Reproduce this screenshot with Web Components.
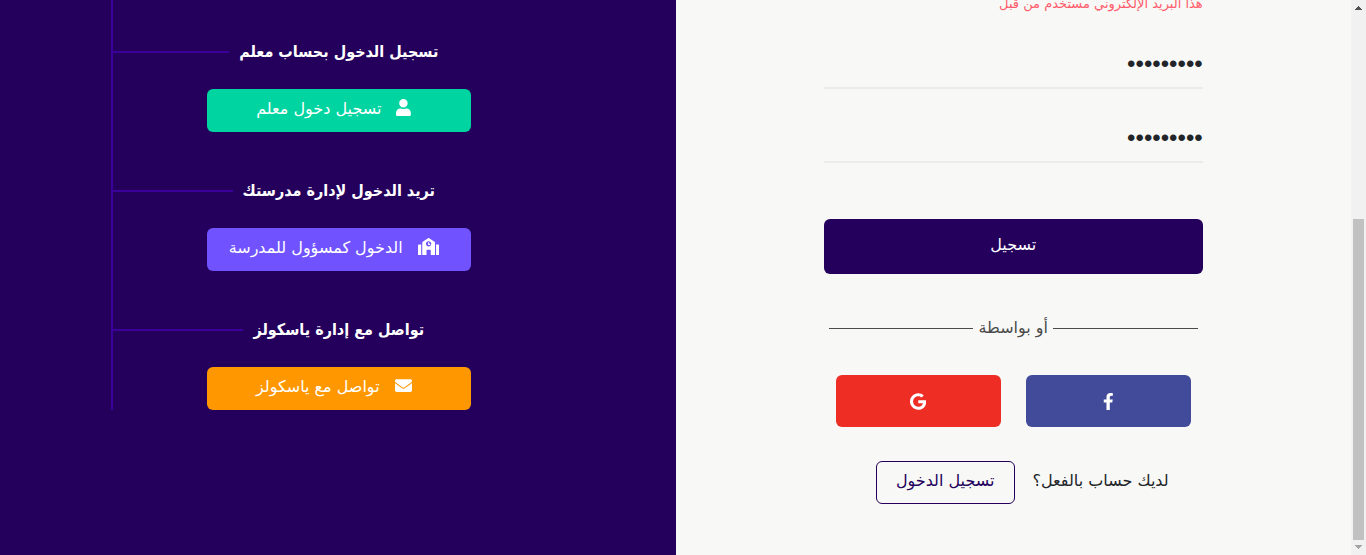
<!DOCTYPE html>
<html lang="ar" dir="rtl">
<head>
<meta charset="utf-8">
<meta name="viewport" content="width=device-width, initial-scale=1">
<title>تسجيل</title>
<style>
  html, body { margin: 0; }
  body {
    font-family: "DejaVu Sans", sans-serif;
    font-size: 16px;
    line-height: 24px;
    color: #212529;
    background: #f8f8f6;
    overflow: hidden;
  }
</style>
</head>
<body>
<signup-page>
  <signup-form slot="form"></signup-form>
  <side-rail slot="aside">
    <rail-item heading="تسجيل الدخول بحساب معلم" icon="user" tone="#00d4a1">تسجيل دخول معلم</rail-item>
    <rail-item heading="تريد الدخول لإدارة مدرستك" icon="school" tone="#7053ff">الدخول كمسؤول للمدرسة</rail-item>
    <rail-item heading="تواصل مع إدارة ياسكولز" icon="envelope" tone="#ff9800">تواصل مع ياسكولز</rail-item>
  </side-rail>
</signup-page>

<script>
const ICONS = {
  user: [448, 'M224 256c70.7 0 128-57.3 128-128S294.7 0 224 0 96 57.3 96 128s57.3 128 128 128zm89.6 32h-16.7c-22.2 10.2-46.9 16-72.9 16s-50.6-5.8-72.9-16h-16.7C60.2 288 0 348.2 0 422.4V464c0 26.5 21.5 48 48 48h352c26.5 0 48-21.5 48-48v-41.6c0-74.2-60.2-134.4-134.4-134.4z'],
  school: [640, 'M0 224v272c0 8.84 7.16 16 16 16h80V192H32c-17.67 0-32 14.33-32 32zm360-48h-24v-40c0-4.42-3.58-8-8-8h-16c-4.42 0-8 3.58-8 8v64c0 4.42 3.58 8 8 8h48c4.42 0 8-3.58 8-8v-16c0-4.42-3.58-8-8-8zm137.75-63.96l-160-106.67a32.02 32.02 0 0 0-35.5 0l-160 106.67A32.002 32.002 0 0 0 128 138.66V512h128V368c0-8.84 7.16-16 16-16h96c8.84 0 16 7.16 16 16v144h128V138.67c0-10.7-5.35-20.69-14.25-26.63zM320 256c-44.18 0-80-35.82-80-80s35.82-80 80-80 80 35.82 80 80-35.82 80-80 80zm288-64h-64v320h80c8.84 0 16-7.16 16-16V224c0-17.67-14.33-32-32-32z'],
  envelope: [512, 'M502.3 190.8c3.9-3.1 9.7-.2 9.7 4.7V400c0 26.5-21.5 48-48 48H48c-26.5 0-48-21.5-48-48V195.6c0-5 5.7-7.8 9.7-4.7 22.4 17.4 52.1 39.5 154.1 113.6 21.1 15.4 56.7 47.8 92.2 47.6 35.7.3 72-32.8 92.3-47.6 102-74.1 131.6-96.3 154-113.7zM256 320c23.2.4 56.6-29.2 73.4-41.4 132.7-96.3 142.8-104.7 173.4-128.7 5.8-4.5 9.2-11.5 9.2-18.9v-19c0-26.5-21.5-48-48-48H48c-26.5 0-48 21.5-48 48v19c0 7.4 3.4 14.3 9.2 18.9 30.6 23.9 40.7 32.4 173.4 128.7 16.8 12.2 50.2 41.8 73.4 41.4z'],
  facebook: [320, 'M279.14 288l14.22-92.66h-88.91v-60.13c0-25.35 12.42-50.06 52.24-50.06h40.42V6.26S260.43 0 225.36 0c-73.22 0-121.08 44.38-121.08 124.72v70.62H22.89V288h81.39v224h100.17V288z'],
  google: [488, 'M488 261.8C488 403.3 391.1 504 248 504 110.8 504 0 393.2 0 256S110.8 8 248 8c66.8 0 123 24.5 166.3 64.9l-67.5 64.9C258.5 52.6 94.3 116.6 94.3 256c0 86.5 69.1 156.6 153.7 156.6 98.2 0 135-70.4 140.8-106.9H248v-85.3h236.1c2.3 12.7 3.9 24.9 3.9 41.4z']
};

class BaseElement extends HTMLElement {
  connectedCallback() {
    if (!this.shadowRoot) this.attachShadow({ mode: 'open' }).innerHTML = this.render();
  }
}

customElements.define('ui-icon', class extends BaseElement {
  render() {
    const [width, path] = ICONS[this.getAttribute('name')];
    return `<style>
      :host { display: inline-flex; flex: none; }
      svg { height: 17px; width: auto; fill: currentColor; display: block; }
    </style>
    <svg viewBox="0 0 ${width} 512" aria-hidden="true"><path d="${path}"/></svg>`;
  }
});

customElements.define('page-scrollbar', class extends BaseElement {
  render() {
    return `<style>
      :host { display: flex; flex-direction: column; align-items: center; width: 15px; background: #f1f1f1; }
      svg { width: 15px; height: 15px; display: block; flex: none; }
      .track { flex: 1; width: 11px; display: flex; flex-direction: column; }
      .before { flex: 204; }
      .thumb { flex: 321; background: #c1c1c1; }
    </style>
    <svg viewBox="0 0 15 15" shape-rendering="crispEdges"><path fill="#505050" d="M7 6h1v1h1v1h1v1h1v1H4V9h1V8h1V7h1z"/></svg>
    <div class="track"><div class="before"></div><div class="thumb"></div></div>
    <svg viewBox="0 0 15 15" shape-rendering="crispEdges"><path fill="#a3a3a3" d="M4 5h7v1h-1v1H9v1H8v1H7V8H6V7H5V6H4z"/></svg>`;
  }
});

customElements.define('rail-item', class extends BaseElement {
  render() {
    return `<style>
      :host { display: block; }
      .heading { display: flex; align-items: center; gap: 10px; margin-bottom: 25px; }
      .heading::before, .heading::after { content: ""; flex: 1; height: 2px; }
      .heading::after { background: #3b0099; }
      h2 {
        margin: 0; color: #fff; white-space: nowrap;
        font-family: "DejaVu Sans Condensed", "DejaVu Sans", sans-serif;
        font-size: 16px; line-height: 24px; font-weight: 700;
      }
      a {
        display: flex; justify-content: center; gap: 15px;
        box-sizing: border-box; width: 264px; max-width: 100%; height: 43px;
        margin: 0 auto; padding: 8px 10px 11px 0;
        border-radius: 6px; color: #fff; text-decoration: none; white-space: nowrap;
      }
      ui-icon { margin-top: 2px; }
    </style>
    <div class="heading"><h2>${this.getAttribute('heading')}</h2></div>
    <a href="#" style="background:${this.getAttribute('tone')}"><ui-icon name="${this.getAttribute('icon')}"></ui-icon><span><slot></slot></span></a>`;
  }
});

customElements.define('side-rail', class extends BaseElement {
  render() {
    return `<style>
      :host { display: block; background: #24005c; }
      nav {
        display: flex; flex-direction: column; gap: 47px;
        width: 66.8%; margin: 0 auto; padding-top: 40px;
        border-left: 2px solid #3b0099;
      }
    </style>
    <nav><slot></slot></nav>`;
  }
});

customElements.define('password-field', class extends BaseElement {
  render() {
    return `<style>
      :host { display: block; }
      input {
        display: block; box-sizing: border-box; width: 100%; height: 50px;
        padding: 2px 0 0; border: 0; border-bottom: 2px solid #ebebea; border-radius: 0;
        background: transparent; color: #212529; outline: 0;
        font-family: "Liberation Sans", sans-serif; font-size: 24px; line-height: 24px;
      }
    </style>
    <input type="password" aria-label="${this.getAttribute('label')}" value="123456789">`;
  }
});

customElements.define('signup-form', class extends BaseElement {
  render() {
    return `<style>
      :host { display: block; }
      form { width: 56.1%; margin: -8px auto 0; }
      .error { margin: 0; font-size: 13px; line-height: 24px; color: #ff5b6a; white-space: nowrap; }
      .fields { display: grid; gap: 24px; margin-top: 23px; }
      button { font: inherit; border: 0; border-radius: 6px; color: #fff; }
      .submit { display: block; width: 100%; height: 55px; margin-top: 56px; padding: 0 0 4px; background: #24005c; }
      .divider { display: flex; align-items: center; gap: 5px; margin: 42px 5px 0; color: #4a4a4a; }
      .divider::before, .divider::after { content: ""; flex: 1; height: 1px; background: #4a4a4a; }
      .social { display: grid; grid-template-columns: 1fr 1fr; gap: 25px; margin: 35px 12px 0; }
      .social button { display: flex; align-items: center; justify-content: center; height: 52px; padding: 0; }
      .facebook { background: #424a9a; }
      .google { background: #ee2d24; }
      .login { display: flex; align-items: center; justify-content: center; margin-top: 34px; white-space: nowrap; }
      .login span { padding-bottom: 4px; }
      .login a {
        box-sizing: border-box; height: 43px; margin: 0 18px; padding: 7px 19px 12px;
        border: 1px solid #24005c; border-radius: 6px; color: #24005c; text-decoration: none;
      }
    </style>
    <form>
      <p class="error">هذا البريد الإلكتروني مستخدم من قبل</p>
      <div class="fields">
        <password-field label="كلمة المرور"></password-field>
        <password-field label="تأكيد كلمة المرور"></password-field>
      </div>
      <button class="submit" type="button">تسجيل</button>
      <div class="divider">أو بواسطة</div>
      <div class="social">
        <button class="facebook" type="button" aria-label="Facebook"><ui-icon name="facebook"></ui-icon></button>
        <button class="google" type="button" aria-label="Google"><ui-icon name="google"></ui-icon></button>
      </div>
      <div class="login"><span>لديك حساب بالفعل؟</span><a href="#">تسجيل الدخول</a></div>
    </form>`;
  }
});

customElements.define('signup-page', class extends BaseElement {
  render() {
    return `<style>
      :host { display: flex; min-height: 100vh; }
      main { flex: 1; display: grid; grid-template-columns: 1fr 1fr; }
      ::slotted(*) { min-width: 0; }
    </style>
    <page-scrollbar aria-hidden="true"></page-scrollbar>
    <main><slot name="form"></slot><slot name="aside"></slot></main>`;
  }
});
</script>
</body>
</html>
